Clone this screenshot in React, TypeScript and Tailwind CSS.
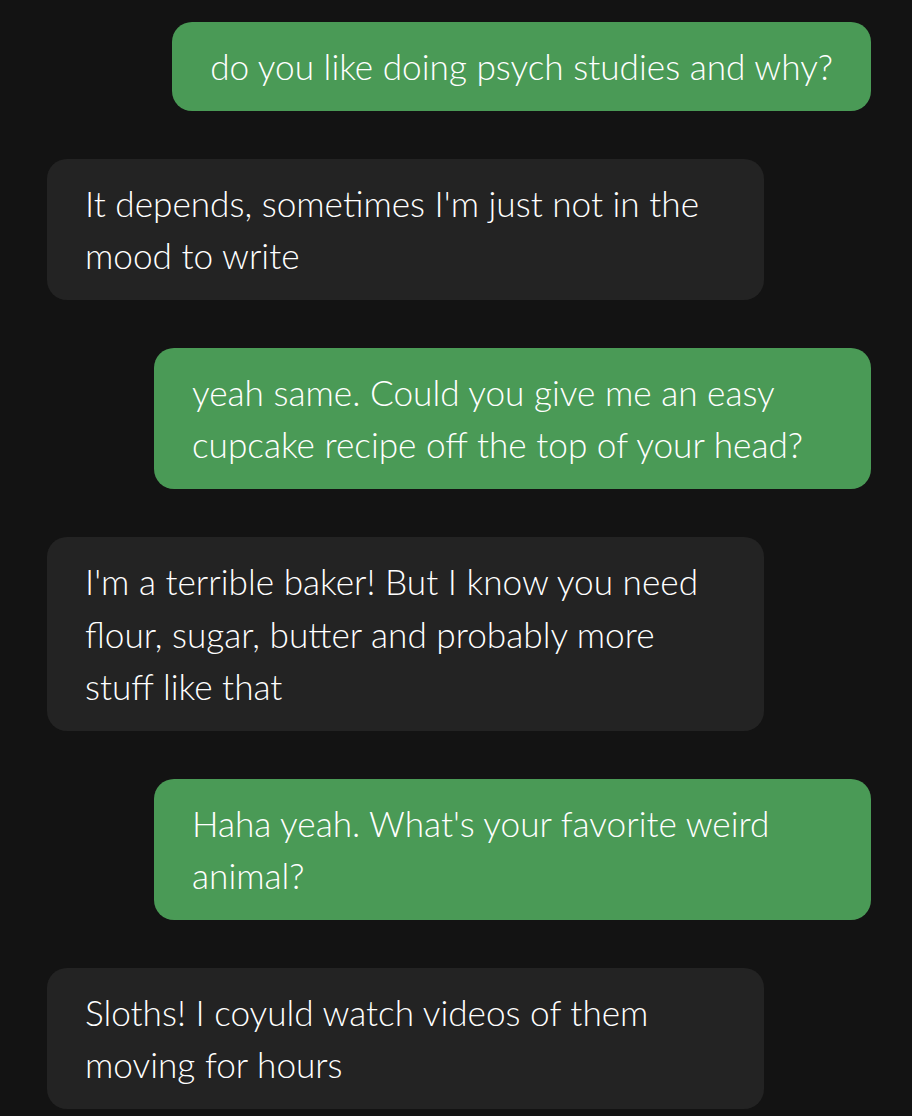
const messages: { me: boolean; lines: string[] }[] = [
  { me: true, lines: ["do you like doing psych studies and why?"] },
  { me: false, lines: ["It depends, sometimes I'm just not in the", "mood to write"] },
  { me: true, lines: ["yeah same. Could you give me an easy", "cupcake recipe off the top of your head?"] },
  {
    me: false,
    lines: ["I'm a terrible baker! But I know you need", "flour, sugar, butter and probably more", "stuff like that"],
  },
  { me: true, lines: ["Haha yeah. What's your favorite weird", "animal?"] },
  { me: false, lines: ["Sloths! I coyuld watch videos of them", "moving for hours"] },
];

function Bubble({ me, lines }: { me: boolean; lines: string[] }) {
  // single-line bubbles shrink to the text, wrapped ones fill the max width
  const width = lines.length > 1 ? "w-[717px]" : "w-fit";
  return (
    <div className={me ? "flex justify-end" : "flex justify-start"}>
      <div
        className={`${width} rounded-[20px] px-[38px] py-[18px] text-white ${
          me ? "bg-[#4a9a56]" : "bg-[#232323]"
        }`}
      >
        {lines.map((l, i) => (
          <div key={i} className="whitespace-nowrap">
            {l}
          </div>
        ))}
      </div>
    </div>
  );
}

export default function App() {
  return (
    <div
      className="min-h-screen w-full bg-[#131313] pl-[47px] pr-[41px] pt-[22px] pb-[8px] flex flex-col gap-[48.2px] text-[35.2px] leading-[52.5px] font-light"
      style={{ fontFamily: "Lato, 'Noto Sans', sans-serif" }}
    >
      {messages.map((m, i) => (
        <Bubble key={i} me={m.me} lines={m.lines} />
      ))}
    </div>
  );
}
